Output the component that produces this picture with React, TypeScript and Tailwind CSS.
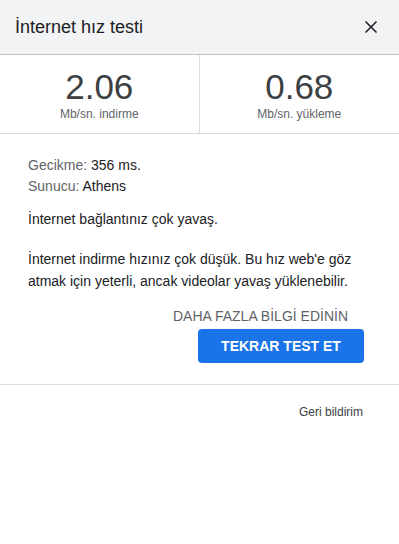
import { X } from "lucide-react";

const stats = [
  { value: "2.06", label: "Mb/sn. indirme" },
  { value: "0.68", label: "Mb/sn. yükleme" },
];

export default function App() {
  return (
    <div className="w-[399px] h-[544px] bg-white text-[#202124] font-['Liberation_Sans',Arial,sans-serif]">
      <div className="h-[55px] bg-[#f1f3f4] border-b border-[#c6c6c6] flex items-center justify-between pl-[15px] pr-[18px]">
        <span className="text-[18px] text-[#202124]">İnternet hız testi</span>
        <X className="w-[20px] h-[20px] text-[#202124]" strokeWidth={2} />
      </div>

      <div className="grid grid-cols-2 h-[79px] border-b border-[#dadce0]">
        {stats.map((s, i) => (
          <div
            key={s.label}
            className={`flex flex-col items-center pt-[12px] ${i === 0 ? "border-r border-[#dadce0]" : ""}`}
          >
            <span className="text-[35px] leading-[40px] text-[#3c4043]">{s.value}</span>
            <span className="text-[12px] leading-[14px] text-[#5f6368]">{s.label}</span>
          </div>
        ))}
      </div>

      <div className="pl-[28px] pr-[30px] pt-[21px] text-[14px]">
        <div className="leading-[21px]">
          <div>
            <span className="text-[#5f6368]">Gecikme:</span> 356 ms.
          </div>
          <div>
            <span className="text-[#5f6368]">Sunucu:</span> Athens
          </div>
        </div>
        <p className="mt-[11px] leading-[22px]">İnternet bağlantınız çok yavaş.</p>
        <p className="mt-[18px] leading-[22px]">
          İnternet indirme hızınız çok düşük. Bu hız web'e göz atmak için yeterli, ancak videolar yavaş yüklenebilir.
        </p>
      </div>

      <div className="flex flex-col items-end pr-[35px] pt-[15px] pb-[21px] border-b border-[#dadce0]">
        <span className="text-[14px] leading-[18px] text-[#5f6368] mr-[16px]">DAHA FAZLA BİLGİ EDİNİN</span>
        <button className="mt-[4px] w-[166px] h-[34px] rounded-[4px] bg-[#1a73e8] text-white text-[14px] font-bold">
          TEKRAR TEST ET
        </button>
      </div>

      <div className="flex justify-end pr-[36px] pt-[18px]">
        <span className="text-[12px] text-[#3c4043]">Geri bildirim</span>
      </div>
    </div>
  );
}
